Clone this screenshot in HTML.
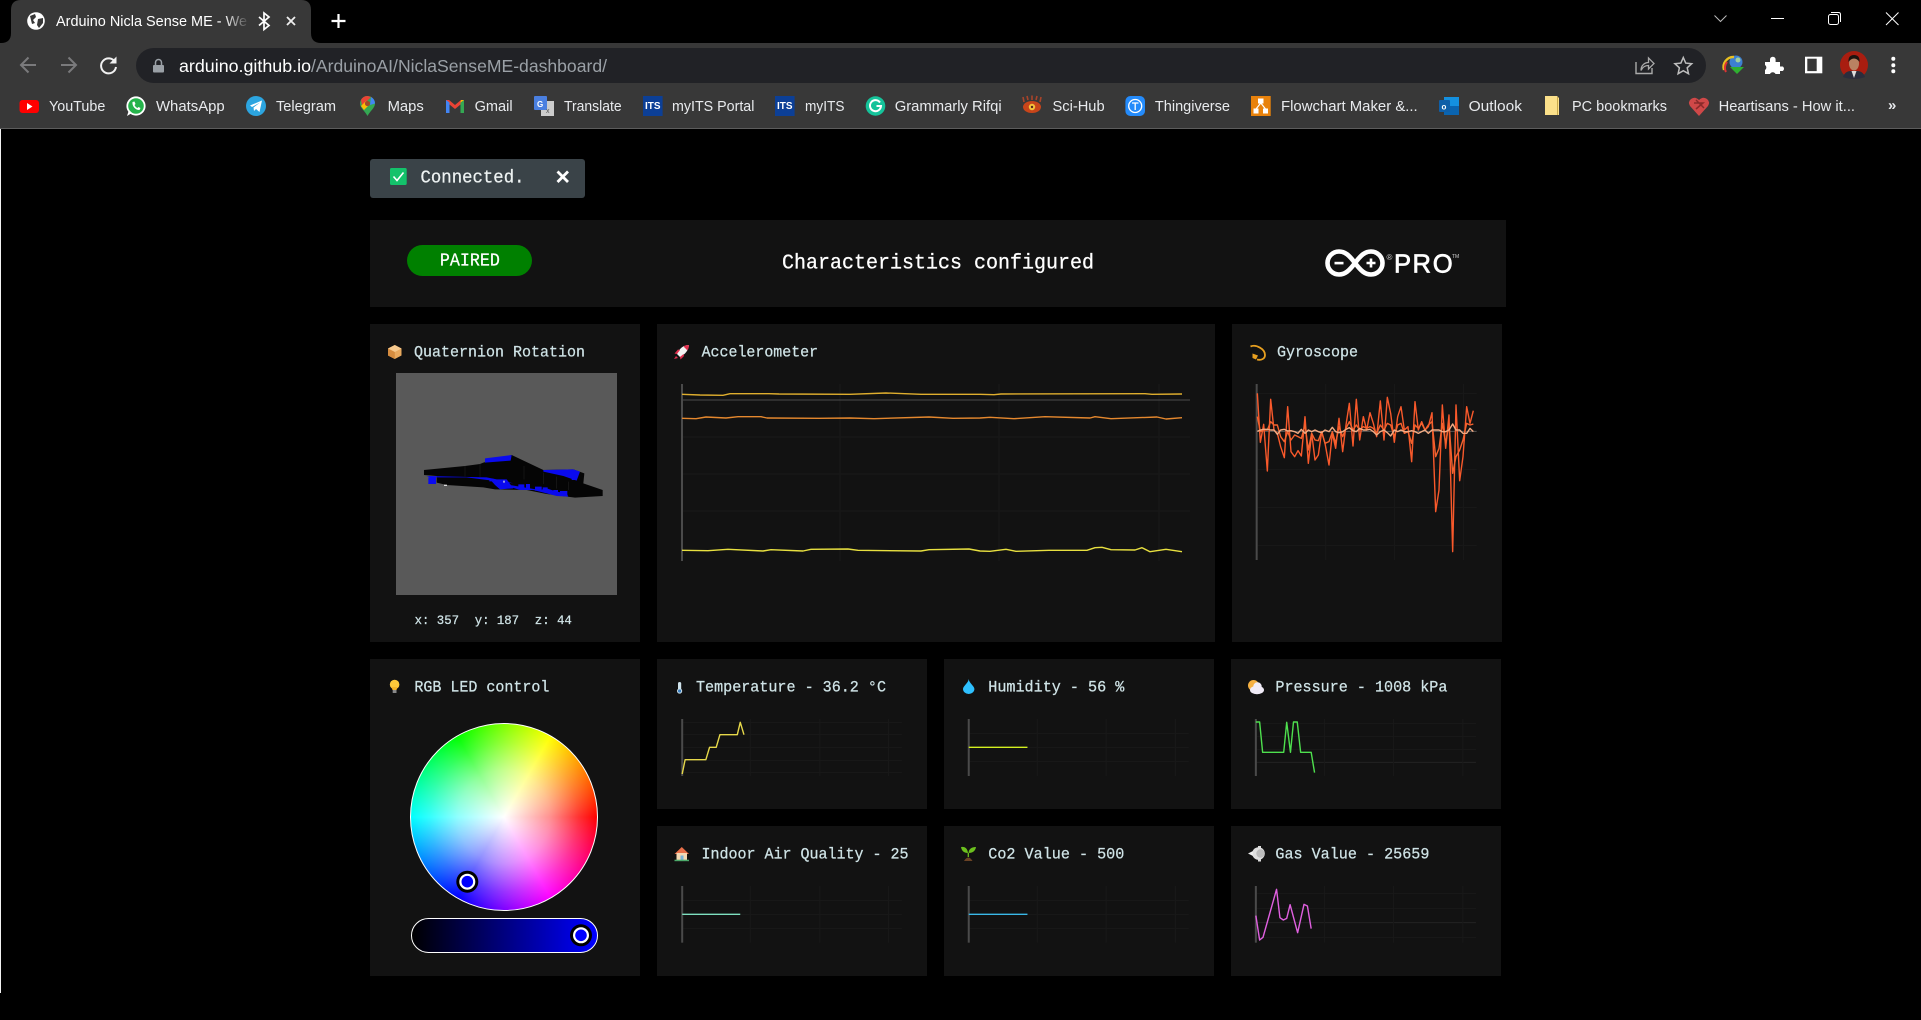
<!DOCTYPE html>
<html lang="en"><head><meta charset="utf-8"><title>Arduino Nicla Sense ME - Web Dashboard</title>
<style>
html,body{margin:0;padding:0;background:#000;width:1921px;height:1020px;overflow:hidden}
.p{position:absolute;background:#121212}
svg.o{position:absolute;left:0;top:0}
.ui{font-family:"Liberation Sans",sans-serif;font-size:15px;fill:#e8eaed}
.m{font-family:"Liberation Mono",monospace;font-size:16px;fill:#cfe3e6;stroke:#cfe3e6;stroke-width:.25px}
.g line{stroke:#191919;stroke-width:1;vector-effect:non-scaling-stroke}
.ax{stroke:#4a4a4a;stroke-width:2;vector-effect:non-scaling-stroke}
.l{fill:none;stroke-width:1.4;stroke-linejoin:round;vector-effect:non-scaling-stroke}
</style></head><body>
<div class="p" style="left:0;top:129px;width:1px;height:864px;background:#f2f2f2"></div>
<div class="p" style="left:370px;top:159px;width:215px;height:39px;background:#3a4348;border-radius:3px"></div>
<div class="p" style="left:370px;top:220px;width:1136px;height:87px"></div>
<div class="p" style="left:370px;top:324px;width:270px;height:318px"></div>
<div class="p" style="left:657px;top:324px;width:558px;height:318px"></div>
<div class="p" style="left:1232px;top:324px;width:270px;height:318px"></div>
<div class="p" style="left:370px;top:659px;width:270px;height:317px"></div>
<div class="p" style="left:657px;top:659px;width:270px;height:150px"></div>
<div class="p" style="left:944px;top:659px;width:270px;height:150px"></div>
<div class="p" style="left:1231px;top:659px;width:270px;height:150px"></div>
<div class="p" style="left:657px;top:826px;width:270px;height:150px"></div>
<div class="p" style="left:944px;top:826px;width:270px;height:150px"></div>
<div class="p" style="left:1231px;top:826px;width:270px;height:150px"></div>
<div class="p" style="left:396px;top:373px;width:221px;height:222px;background:#595959"></div>
<div class="p" style="left:410px;top:722.5px;width:188px;height:188px;border-radius:50%;box-sizing:border-box;border:1.2px solid #fff;background:radial-gradient(circle closest-side,#fff 0,rgba(255,255,255,.56) 50%,rgba(255,255,255,.2) 80%,rgba(255,255,255,0) 100%),conic-gradient(from 90deg,#f00,#f0f,#00f,#0ff,#0f0,#ff0,#f00)"></div>
<div class="p" style="left:411px;top:918px;width:187px;height:35px;box-sizing:border-box;border:1.5px solid #fff;border-radius:18px;background:linear-gradient(to right,#000,#00f)"></div>

<svg class="o" width="1921" height="1020" viewBox="0 0 1921 1020" xmlns="http://www.w3.org/2000/svg">
<!-- browser chrome -->
<rect x="0" y="43" width="1921" height="85" fill="#383838"/>
<rect x="0" y="128" width="1921" height="1" fill="#5c5c5c"/>
<path d="M1,43 Q11,43 11,33 V10 Q11,0 21,0 H301 Q311,0 311,10 V33 Q311,43 321,43 Z" fill="#383838"/>
<circle cx="36" cy="21" r="8.8" fill="#fff"/>
<path d="M30,16 L35,14 L36,17 L33,20 L35,23 L32,24 Z M38,19 L43,18 L43,23 L39,28 L37,25 Z" fill="#383838"/>
<defs><linearGradient id="fade" x1="0" x2="1"><stop offset=".88" stop-color="#fff"/><stop offset="1" stop-color="#fff" stop-opacity=".1"/></linearGradient></defs>
<text x="56" y="26" class="ui" fill="url(#fade)" style="fill:url(#fade)" textLength="191" lengthAdjust="spacingAndGlyphs">Arduino Nicla Sense ME - We</text>
<path d="M259,17 L269,25.5 L264,29.5 V13 L269,17 L259,25.5" fill="none" stroke="#fff" stroke-width="1.7"/>
<path d="M287,17 L295,25 M295,17 L287,25" stroke="#eee" stroke-width="1.8"/>
<path d="M331.5,21 H345.5 M338.5,14 V28" stroke="#fff" stroke-width="2.2"/>
<path d="M1714.5,15.5 L1720.5,21.5 L1726.5,15.5" fill="none" stroke="#bbb" stroke-width="1"/>
<path d="M1771,18.5 H1784" stroke="#fff" stroke-width="1"/>
<rect x="1828.5" y="14.5" width="10" height="10" rx="2" fill="none" stroke="#fff"/>
<path d="M1831,12.5 H1838.5 Q1840.5,12.5 1840.5,14.5 V22" fill="none" stroke="#fff"/>
<path d="M1886,12.5 L1898.5,25 M1898.5,12.5 L1886,25" stroke="#fff" stroke-width="1"/>
<path d="M36,65 H22 M28.5,57.5 L21,65 L28.5,72.5" fill="none" stroke="#7a7a7c" stroke-width="2"/>
<path d="M61,65 H75 M68.5,57.5 L76,65 L68.5,72.5" fill="none" stroke="#7a7a7c" stroke-width="2"/>
<path d="M115,62 A7.5,7.5 0 1 0 116,67" fill="none" stroke="#f1f1f1" stroke-width="2"/>
<path d="M116.5,56.5 V63.5 H109.5 Z" fill="#f1f1f1"/>
<rect x="136" y="48" width="1570" height="35" rx="17.5" fill="#212226"/>
<rect x="153" y="65" width="11" height="7.5" rx="1" fill="#9aa0a6"/>
<path d="M155.5,65 V62.5 A3,3 0 0 1 161.5,62.5 V65" fill="none" stroke="#9aa0a6" stroke-width="1.5"/>
<text x="179" y="72" class="ui" style="font-size:17.5px;fill:#fff" textLength="132" lengthAdjust="spacingAndGlyphs">arduino.github.io</text>
<text x="311" y="72" class="ui" style="font-size:17.5px;fill:#9aa0a6" textLength="296" lengthAdjust="spacingAndGlyphs">/ArduinoAI/NiclaSenseME-dashboard/</text>
<path d="M1636,62 V73.5 H1652 V68" fill="none" stroke="#aaa" stroke-width="1.4"/>
<path d="M1641,70.5 C1641,65 1645,62.5 1648.5,62.5 V58 L1654,63.5 L1648.5,69 V65.5 C1645,65.5 1642.5,67 1641,70.5 Z" fill="none" stroke="#aaa" stroke-width="1.3"/>
<path d="M1683.3,57.5 L1685.7,63.1 L1691.7,63.7 L1687.2,67.8 L1688.5,73.7 L1683.3,70.7 L1678.1,73.7 L1679.4,67.8 L1674.9,63.7 L1680.9,63.1 Z" fill="none" stroke="#bdbdbd" stroke-width="1.5"/>
<circle cx="1736" cy="62" r="6.5" fill="#3d7fd0"/><circle cx="1738" cy="60" r="2.5" fill="#9fd0a0"/>
<path d="M1724,70 A10,10 0 0 1 1734,57" fill="none" stroke="#e8c020" stroke-width="2.4"/>
<path d="M1726,72 A9,9 0 0 1 1727,62" fill="none" stroke="#d33" stroke-width="2"/>
<path d="M1730,67 H1744 L1737,74 Z" fill="#2fb030"/>
<path d="M1765,62 H1770 V59.5 A2.8,2.8 0 0 1 1775.6,59.5 V62 H1780 V66.5 H1782.7 A2.6,2.6 0 0 1 1782.7,71 H1780 V74 H1775.5 A3,3 0 0 0 1770,74 H1765 V70 A3,3 0 0 0 1765,65 Z" fill="#fff"/>
<rect x="1805" y="56.7" width="17.3" height="16.6" fill="#fff"/><rect x="1807.3" y="58.7" width="9.4" height="12.4" fill="#383838"/>
<circle cx="1854" cy="65" r="14" fill="#a91d10"/>
<path d="M1843,77 Q1845,71 1851,71 H1857 Q1863,71 1865,77 Q1860,79 1854,79 Q1848,79 1843,77 Z" fill="#2a2d3c"/>
<path d="M1851.5,71 L1854,78 L1856.5,71 Z" fill="#ddd"/>
<ellipse cx="1854" cy="63.5" rx="5" ry="7" fill="#b98262"/>
<path d="M1848.5,62 Q1848,55 1854,55 Q1860,55 1859.5,62 Q1857,58.5 1854,58.5 Q1851,58.5 1848.5,62 Z" fill="#1c1410"/>
<circle cx="1893.3" cy="58.7" r="2" fill="#fff"/><circle cx="1893.3" cy="65.3" r="2" fill="#fff"/><circle cx="1893.3" cy="71.3" r="2" fill="#fff"/>

<!-- bookmarks -->
<rect x="19.5" y="100" width="19.5" height="13" rx="3" fill="#f00"/><path d="M27,103 L32.5,106.5 L27,110 Z" fill="#fff"/>
<text x="49" y="111" class="ui" textLength="56.3" lengthAdjust="spacingAndGlyphs">YouTube</text>
<circle cx="136" cy="106" r="9.6" fill="#fff"/><circle cx="136" cy="106" r="7.8" fill="#25b34b"/><path d="M127,116 L129,110 L132,113 Z" fill="#fff"/><path d="M132.5,102 C132,106 135,110 139.5,110 L140.5,108 L138.5,107 L137.5,108 C136,107.5 135,106 134.5,105 L135.5,104 L134.5,101.5 Z" fill="#fff"/>
<text x="156" y="111" class="ui" textLength="68.7" lengthAdjust="spacingAndGlyphs">WhatsApp</text>
<circle cx="256" cy="106" r="10" fill="#2ca5e0"/><path d="M250,105.5 L262,100.5 L259.5,112 L256,109 L254,111 L253.5,107.5 L260,102.5 L252,107 Z" fill="#fff"/>
<text x="276" y="111" class="ui" textLength="60" lengthAdjust="spacingAndGlyphs">Telegram</text>
<path d="M367.5,96 A7.5,7.5 0 0 1 375,103.5 C375,108 370,111 367.5,116 C365,111 360,108 360,103.5 A7.5,7.5 0 0 1 367.5,96 Z" fill="#34a853"/><path d="M361,100 A7.5,7.5 0 0 1 367.5,96 L371,97 L362,106 Z" fill="#ea4335"/><path d="M371,97 A7.5,7.5 0 0 1 375,103.5 L370,105 Z" fill="#4285f4"/><path d="M361,106 L366,101 L370,104 L364,110 Z" fill="#fbbc04"/><circle cx="367.5" cy="103.5" r="2.6" fill="#a04a2a"/>
<text x="387.6" y="111" class="ui" textLength="36.2" lengthAdjust="spacingAndGlyphs">Maps</text>
<path d="M446,113 V100 L449,100 L455,105 L461,100 L464,100 V113 H460.5 V104.5 L455,109 L449.5,104.5 V113 Z" fill="#ea4335"/><path d="M446,113 V100 L449.5,102.5 V113 Z" fill="#4285f4"/><path d="M460.5,113 V102.5 L464,100 V113 Z" fill="#34a853"/><path d="M460.5,102.5 L464,100 L461,100 Z" fill="#fbbc04"/>
<text x="474.6" y="111" class="ui" textLength="38" lengthAdjust="spacingAndGlyphs">Gmail</text>
<rect x="541" y="101" width="13" height="15" fill="#ccc"/><rect x="534" y="96" width="13" height="14" rx="1" fill="#4a7fe0"/><text x="537" y="107" style="font:bold 8px 'Liberation Sans',sans-serif;fill:#fff">G</text><text x="546" y="113" style="font:7px 'Liberation Sans',sans-serif;fill:#555">x</text>
<text x="564" y="111" class="ui" textLength="57.6" lengthAdjust="spacingAndGlyphs">Translate</text>
<rect x="643" y="96" width="19.6" height="20" fill="#0c3f96"/><text x="645" y="109" style="font:bold 10px 'Liberation Sans',sans-serif;fill:#fff" textLength="15.5" lengthAdjust="spacingAndGlyphs">ITS</text>
<text x="672" y="111" class="ui" textLength="82.4" lengthAdjust="spacingAndGlyphs">myITS Portal</text>
<rect x="775" y="96" width="19.6" height="20" fill="#0c3f96"/><text x="777" y="109" style="font:bold 10px 'Liberation Sans',sans-serif;fill:#fff" textLength="15.5" lengthAdjust="spacingAndGlyphs">ITS</text>
<text x="805" y="111" class="ui" textLength="39.5" lengthAdjust="spacingAndGlyphs">myITS</text>
<circle cx="875.5" cy="106" r="9.8" fill="#15c39a"/><path d="M880,102.5 A5.5,5.5 0 1 0 881,106 H876.5" fill="none" stroke="#fff" stroke-width="2"/>
<text x="894.7" y="111" class="ui" textLength="107" lengthAdjust="spacingAndGlyphs">Grammarly Rifqi</text>
<ellipse cx="1032" cy="107" rx="9" ry="6" fill="#c8451a"/><circle cx="1032" cy="107" r="3.2" fill="#f3c33c"/><circle cx="1032" cy="107" r="1.2" fill="#522"/><path d="M1024,102 L1023,97 M1028,100 L1027,96 M1032,100 L1032,95.5 M1036,100 L1037,96 M1040,102 L1041,97" stroke="#a9442a" stroke-width="1.6"/>
<text x="1052.5" y="111" class="ui" textLength="52.1" lengthAdjust="spacingAndGlyphs">Sci-Hub</text>
<rect x="1125.4" y="96" width="19.6" height="20" rx="5" fill="#248bfb"/><circle cx="1135.2" cy="106" r="6.5" fill="none" stroke="#fff" stroke-width="1.3"/><path d="M1132,103 H1138.5 M1135.2,103 V110" stroke="#fff" stroke-width="1.3"/>
<text x="1154.9" y="111" class="ui" textLength="75.1" lengthAdjust="spacingAndGlyphs">Thingiverse</text>
<rect x="1251" y="96" width="19.7" height="20" fill="#e8820c"/><rect x="1258" y="98.5" width="5.5" height="5" fill="#fff"/><rect x="1253.5" y="108.5" width="5" height="5" fill="#fff"/><rect x="1263" y="108.5" width="5" height="5" fill="#fff"/><path d="M1260.8,103 L1256,109 M1260.8,103 L1265.5,109" stroke="#fff" stroke-width="1.2"/>
<text x="1281" y="111" class="ui" textLength="136.7" lengthAdjust="spacingAndGlyphs">Flowchart Maker &amp;...</text>
<rect x="1444" y="97" width="15" height="18" fill="#1490df"/><rect x="1444" y="106" width="15" height="9" fill="#0a64b0"/><rect x="1439" y="100" width="11" height="12" rx="1" fill="#0f5fa8"/><text x="1441.5" y="109.5" style="font:bold 8px 'Liberation Sans',sans-serif;fill:#fff">o</text>
<text x="1468.6" y="111" class="ui" textLength="53.4" lengthAdjust="spacingAndGlyphs">Outlook</text>
<path d="M1545,96 H1557 L1559,98 V115 H1545 Z" fill="#fbe08a"/><path d="M1557.5,97 V115" stroke="#c9a94a"/>
<text x="1572" y="111" class="ui" textLength="95" lengthAdjust="spacingAndGlyphs">PC bookmarks</text>
<path d="M1699,116 L1690,106 Q1687.5,102 1691,99 Q1695,96 1699,100 Q1703,96 1707,99 Q1710.5,102 1708,106 Z" fill="#cf4848"/><path d="M1694,103 L1703,103 L1696,109 M1696,100 L1704,108" fill="none" stroke="#8a2a2a" stroke-width="1.5"/>
<text x="1718.6" y="111" class="ui" textLength="136.4" lengthAdjust="spacingAndGlyphs">Heartisans - How it...</text>
<text x="1888" y="110" class="ui" style="font-weight:bold">»</text>

<!-- toast -->
<rect x="390" y="168" width="16.7" height="17" rx="1.5" fill="#14c26b"/><path d="M393.5,176.5 L397,180.5 L403.5,172.5" fill="none" stroke="#fff" stroke-width="1.6"/>
<text x="420.5" y="182.5" class="m" style="font-size:18.5px;fill:#eef3f3;stroke:#eef3f3" textLength="104" lengthAdjust="spacingAndGlyphs">Connected.</text>
<path d="M557.5,171.5 L568,182 M568,171.5 L557.5,182" stroke="#fff" stroke-width="2.8"/>

<!-- header -->
<rect x="407" y="245" width="125" height="31" rx="15.5" fill="#008000"/>
<text x="439.9" y="265.5" class="m" style="font-size:18px;fill:#fff;stroke:#fff" textLength="60" lengthAdjust="spacingAndGlyphs">PAIRED</text>
<text x="782" y="268.5" class="m" style="font-size:21.5px;fill:#fff;stroke:#fff" textLength="312" lengthAdjust="spacingAndGlyphs">Characteristics configured</text>
<path d="M1355,263 C1349,255 1345,251.5 1339,251.5 A11.5,11.5 0 0 0 1339,274.5 C1345,274.5 1349,271 1355,263 C1361,255 1365,251.5 1371,251.5 A11.5,11.5 0 0 1 1371,274.5 C1365,274.5 1361,271 1355,263 Z" fill="none" stroke="#fff" stroke-width="4.6"/>
<rect x="1334.5" y="261.8" width="9" height="2.6" fill="#fff"/>
<path d="M1366.5,263 H1375.5 M1371,258.5 V267.5" stroke="#fff" stroke-width="2.6"/>
<text x="1386.5" y="260" style="font:8px 'Liberation Sans',sans-serif;fill:#ccc">®</text>
<text y="272.7" style="font:25.6px 'Liberation Sans',sans-serif;fill:#fff;stroke:#fff;stroke-width:.7px" x="1394 1412.5 1432.7">PRO</text>
<text x="1452" y="258" style="font:5px 'Liberation Sans',sans-serif;fill:#ccc">TM</text>

<!-- 3D object -->
<g transform="translate(400 390) scale(.33333)">
<path d="M72,240 L195,228 L240,222 L250,218 L335,195 L430,240 L520,238 L553,250 L550,280 L608,300 L608,318 L525,323 L440,312 L380,300 L285,298 L250,292 L140,285 L110,278 L110,258 L72,255 Z" fill="#050505"/>
<path d="M255,205 L335,195 L332,212 L255,218 Z M430,240 L520,238 L540,245 L530,272 L490,258 L430,245 Z" fill="#0a0aee"/>
<path d="M85,262 L108,262 L108,282 L85,282 Z M80,258 L260,262 L300,270 L340,280 L300,275 L200,262 L90,262 Z M270,268 L320,268 L340,295 L300,298 L285,285 Z M330,285 L390,295 L420,300 L440,295 L470,305 L500,310 L505,320 L470,318 L440,310 L400,300 L360,300 L335,292 Z" fill="#0a0aee"/>
<path d="M355,283 h18 v10 h-18 z M378,282 h12 v16 h-12 z M405,290 h20 v12 h-20 z M428,292 h15 v14 h-15 z M460,300 h14 v12 h-14 z M480,303 h22 v14 h-22 z M268,266 h12 v8 h-12 z M515,245 h10 v25 h-10 z" fill="#0a0aee"/>
<rect x="132" y="284" width="9" height="4" fill="#ddd"/><rect x="310" y="272" width="4" height="6" fill="#ddd"/>
<path d="M195,228 V260 M240,222 V262 M372,228 V268 M430,248 V282 M470,260 V296 M505,275 V300" stroke="#1c1c1c" stroke-width="2"/>
</g>
<text x="414.6" y="623.8" class="m" style="font-size:13px" textLength="44.4" lengthAdjust="spacingAndGlyphs">x: 357</text>
<text x="474.7" y="623.8" class="m" style="font-size:13px" textLength="44.4" lengthAdjust="spacingAndGlyphs">y: 187</text>
<text x="534.8" y="623.8" class="m" style="font-size:13px" textLength="37" lengthAdjust="spacingAndGlyphs">z: 44</text>

<!-- titles and emoji -->
<path d="M394.8,345 L401.5,348.5 V355.5 L394.8,359 L388,355.5 V348.5 Z" fill="#e8a95e"/><path d="M394.8,352 L401.5,348.5 L394.8,345 L388,348.5 Z" fill="#f6c98e"/><path d="M394.8,352 V359 L388,355.5 V348.5 Z" fill="#d58c3f"/>
<text x="414" y="356.5" class="m" textLength="171" lengthAdjust="spacingAndGlyphs">Quaternion Rotation</text>
<path d="M689,345 Q681,345 677,354 L680,357 Q688,353 689,345 Z" fill="#f2f2f2"/><path d="M689,345 Q685,345 683.5,346.5 L687.5,350.5 Q689,348 689,345 Z" fill="#e0304e"/><path d="M677,354 L674.5,353.5 L678,349.5 L680,350 Z M680,357 L680.5,359.5 L684,356 L683.5,354 Z M676,356 L674,359 L678,358 Z" fill="#e0304e"/>
<text x="701.6" y="356.5" class="m" textLength="116.5" lengthAdjust="spacingAndGlyphs">Accelerometer</text>
<path d="M1250.5,346.5 C1256,344 1265,349 1265,355 C1265,359 1261,360.5 1257,359.5" fill="none" stroke="#e8a020" stroke-width="1.8"/><path d="M1252.5,353.5 L1258,355.5 L1256,359.5 L1252.5,358 Z" fill="#e8a020"/>
<text x="1277" y="356.5" class="m" textLength="81" lengthAdjust="spacingAndGlyphs">Gyroscope</text>
<circle cx="394.6" cy="684.5" r="4.8" fill="#fdc93a"/><path d="M391.5,687 H397.5 L396.5,690 H392.5 Z" fill="#f5b52a"/><rect x="392.7" y="690" width="3.8" height="3" fill="#888"/>
<text x="414.4" y="691.5" class="m" textLength="135" lengthAdjust="spacingAndGlyphs">RGB LED control</text>
<rect x="678" y="682" width="3.2" height="10" rx="1.6" fill="#cfe2ea"/><circle cx="679.6" cy="691" r="2.6" fill="#cfe2ea"/><circle cx="679.6" cy="691" r="1.6" fill="#3a7ec0"/>
<text x="696" y="691.5" class="m" textLength="190" lengthAdjust="spacingAndGlyphs">Temperature - 36.2 °C</text>
<path d="M968.7,679 C969,683 974.4,686 974.4,689 A5.7,5 0 0 1 963,689 C963,686 968.4,683 968.7,679 Z" fill="#2ec0ff"/>
<text x="988.3" y="691.5" class="m" textLength="136" lengthAdjust="spacingAndGlyphs">Humidity - 56 %</text>
<circle cx="1253.5" cy="685.5" r="5.5" fill="#f5b042"/><ellipse cx="1257" cy="690" rx="7" ry="4.2" fill="#f0ebf7"/><circle cx="1257.5" cy="686.5" r="4.2" fill="#f0ebf7"/>
<text x="1275.4" y="691.5" class="m" textLength="172" lengthAdjust="spacingAndGlyphs">Pressure - 1008 kPa</text>
<path d="M681.8,847 L689,854 H687 V860.7 H676.5 V854 H674.5 Z" fill="#e8704a"/><rect x="676.5" y="853" width="10.5" height="7.7" fill="#f4d9b4"/><rect x="680.5" y="855.5" width="3" height="5.2" fill="#7ab5d8"/><rect x="674.5" y="859.7" width="14.5" height="1.5" fill="#4ca96a"/>
<text x="701.5" y="858.5" class="m" textLength="207" lengthAdjust="spacingAndGlyphs">Indoor Air Quality - 25</text>
<path d="M968,853 Q962,853 961,847 Q967,846 968,853 Z M968.5,853 Q969,847 976,847 Q975,853 968.5,853 Z" fill="#6cc01e"/><path d="M968.3,853 V857" stroke="#6cc01e" stroke-width="1.3"/><path d="M964,861 Q968.3,854 972.5,861 Z" fill="#6b4325"/>
<text x="988.3" y="858.5" class="m" textLength="136" lengthAdjust="spacingAndGlyphs">Co2 Value - 500</text>
<circle cx="1258.5" cy="853.5" r="6.3" fill="#e0e0e0"/><circle cx="1260.5" cy="853.5" r="4.2" fill="#bcbcbc"/><path d="M1248,853.5 L1253,851 V856 Z" fill="#eee"/><rect x="1258" y="846" width="3" height="2" fill="#ddd"/><rect x="1258" y="859.5" width="3" height="2" fill="#ddd"/>
<text x="1275.4" y="858.5" class="m" textLength="154" lengthAdjust="spacingAndGlyphs">Gas Value - 25659</text>

<!-- accelerometer chart -->
<g class="g"><line x1="682" y1="437" x2="1190" y2="437"/><line x1="682" y1="474" x2="1190" y2="474"/><line x1="682" y1="511" x2="1190" y2="511"/><line x1="840" y1="384" x2="840" y2="561"/><line x1="999" y1="384" x2="999" y2="561"/><line x1="1159" y1="384" x2="1159" y2="561"/></g>
<line x1="682" y1="400" x2="1190" y2="400" stroke="#4c4c4c"/>
<line x1="682" y1="384" x2="682" y2="561" class="ax"/>
<polyline class="l" stroke="#dfae2e" points="682,394.3 700,395 723,395.3 730,393.7 769,393.7 779,394 850,394.3 886,393 921,394.3 980,394.3 994,394.7 1001,394 1145,393.7 1152,394.3 1182,394"/>
<polyline class="l" stroke="#e5882e" points="682,418.3 696,418.7 706,417 726,418 738,416.7 761,416.7 767,418 819,418.3 850,418 874,418.7 929,417 953,418.3 980,418 990,417.3 1014,418.7 1045,416.7 1090,418 1095,416.7 1111,418.7 1157,417 1166,419 1182,417.7"/>
<polyline class="l" stroke="#e8e040" points="682,550.3 708,550.7 728,549.3 763,551 771,549.7 803,551 811,549.3 848,549 858,550.3 921,551 929,549.7 969,549 980,551 990,551.3 1006,549.3 1016,551.3 1049,550.3 1071,550.3 1087,550.3 1095,547.7 1102,547.3 1111,549.7 1135,550 1142,547.7 1150,551.7 1166,549.3 1182,551.7"/>

<!-- gyroscope chart -->
<g transform="translate(1250 380) scale(.33333)">
<g class="g"><line x1="20" y1="40" x2="680" y2="40"/><line x1="20" y1="268" x2="680" y2="268"/><line x1="20" y1="382" x2="680" y2="382"/><line x1="20" y1="496" x2="680" y2="496"/><line x1="227" y1="12" x2="227" y2="540"/><line x1="433" y1="12" x2="433" y2="540"/><line x1="640" y1="12" x2="640" y2="540"/></g>
<line x1="20" y1="154" x2="680" y2="154" stroke="#555" style="vector-effect:non-scaling-stroke"/>
<line x1="20" y1="12" x2="20" y2="540" class="ax"/>
<polyline class="l" stroke="#f9592b" points="22,40 31,187 41,133 52,273 62,58 72,150 82,160 92,200 103,233 113,80 123,215 134,230 144,212 154,228 165,110 175,250 185,160 195,240 205,225 215,155 225,190 237,255 247,160 257,205 267,115 278,215 288,135 298,70 309,198 319,58 329,180 340,110 350,150 360,98 370,130 380,170 391,63 402,180 412,52 422,100 433,187 443,110 453,80 463,150 474,140 485,245 495,65 505,150 515,125 525,150 535,140 546,98 557,395 567,330 577,75 587,205 597,105 608,515 618,75 629,302 639,230 650,80 660,130 670,92"/>
<polyline class="l" stroke="#f4622e" points="22,110 31,155 41,150 52,150 62,125 72,135 82,135 92,170 103,185 113,155 123,180 134,165 144,170 154,175 165,135 175,210 185,160 195,180 205,182 215,155 225,190 237,185 247,155 257,190 267,140 278,170 288,145 298,125 309,150 319,135 329,150 340,140 350,145 360,140 370,145 380,160 391,135 402,150 412,130 422,135 433,170 443,135 453,130 463,160 474,155 485,190 495,135 505,145 515,130 525,150 535,135 546,125 557,230 567,205 577,130 587,190 597,130 608,280 618,230 629,210 639,180 650,130 660,135 670,132"/>
<polyline class="l" stroke="#f2aa82" points="22,154 31,150 41,148 52,148 62,150 72,150 82,163 92,150 103,148 113,153 123,152 134,155 144,160 154,148 165,160 175,150 185,155 195,150 205,155 215,158 225,150 237,155 247,142 257,155 267,158 278,155 288,148 298,143 309,152 319,155 329,145 340,150 350,150 360,148 370,155 380,165 391,155 402,150 412,158 422,168 433,150 443,155 453,150 463,155 474,155 485,152 495,155 505,160 515,155 525,150 535,160 546,150 557,150 567,150 577,155 587,155 597,150 608,132 618,150 629,150 639,160 650,160 660,145 670,155"/>
</g>

<!-- small charts (left column) -->
<g transform="translate(360 650) scale(.3699 .33333)">
<g class="g"><line x1="871" y1="217" x2="1465" y2="217"/><line x1="871" y1="254" x2="1465" y2="254"/><line x1="871" y1="292" x2="1465" y2="292"/><line x1="871" y1="331" x2="1465" y2="331"/><line x1="871" y1="368" x2="1465" y2="368"/><line x1="1055" y1="207" x2="1055" y2="378"/><line x1="1243" y1="207" x2="1243" y2="378"/><line x1="1429" y1="207" x2="1429" y2="378"/>
<line x1="871" y1="751" x2="1465" y2="751"/><line x1="871" y1="793" x2="1465" y2="793"/><line x1="871" y1="835" x2="1465" y2="835"/><line x1="1055" y1="708" x2="1055" y2="878"/><line x1="1243" y1="708" x2="1243" y2="878"/><line x1="1429" y1="708" x2="1429" y2="878"/></g>
<line x1="871" y1="207" x2="871" y2="378" class="ax"/><line x1="871" y1="708" x2="871" y2="878" class="ax"/>
<polyline class="l" stroke="#e6d84a" points="871,372 879,329 935,329 945,292 963,292 973,254 1020,254 1028,217 1038,254"/>
<polyline class="l" stroke="#7fe0c0" points="871,793 1028,793"/>
</g>
<g transform="translate(930 650) scale(.37628 .33333)">
<g class="g"><line x1="103" y1="250" x2="688" y2="250"/><line x1="103" y1="292" x2="688" y2="292"/><line x1="103" y1="334" x2="688" y2="334"/><line x1="285" y1="207" x2="285" y2="378"/><line x1="468" y1="207" x2="468" y2="378"/><line x1="652" y1="207" x2="652" y2="378"/>
<line x1="103" y1="751" x2="688" y2="751"/><line x1="103" y1="793" x2="688" y2="793"/><line x1="103" y1="835" x2="688" y2="835"/><line x1="285" y1="708" x2="285" y2="878"/><line x1="468" y1="708" x2="468" y2="878"/><line x1="652" y1="708" x2="652" y2="878"/>
<line x1="866" y1="220" x2="1451" y2="220"/><line x1="866" y1="259" x2="1451" y2="259"/><line x1="866" y1="298" x2="1451" y2="298"/><line x1="866" y1="337" x2="1451" y2="337" style="stroke:#222"/><line x1="1048" y1="207" x2="1048" y2="378"/><line x1="1232" y1="207" x2="1232" y2="378"/><line x1="1416" y1="207" x2="1416" y2="378"/>
<line x1="866" y1="730" x2="1451" y2="730"/><line x1="866" y1="775" x2="1451" y2="775"/><line x1="866" y1="818" x2="1451" y2="818" style="stroke:#222"/><line x1="866" y1="862" x2="1451" y2="862"/><line x1="1048" y1="708" x2="1048" y2="878"/><line x1="1232" y1="708" x2="1232" y2="878"/><line x1="1416" y1="708" x2="1416" y2="878"/></g>
<line x1="103" y1="207" x2="103" y2="378" class="ax"/><line x1="103" y1="708" x2="103" y2="878" class="ax"/><line x1="866" y1="207" x2="866" y2="378" class="ax"/><line x1="866" y1="708" x2="866" y2="878" class="ax"/>
<polyline class="l" stroke="#d4f020" points="103,292 259,292"/>
<polyline class="l" stroke="#3ab8e8" points="103,793 259,793"/>
<polyline class="l" stroke="#4ee04e" points="866,216 876,216 884,307 940,307 948,217 958,307 966,216 976,216 985,307 1013,307 1022,368"/>
<polyline class="l" stroke="#e060e0" points="866,797 876,870 885,862 921,718 930,803 939,810 948,805 957,764 977,848 994,763 1003,768 1013,836"/>
</g>

<!-- colour handles -->
<circle cx="467.3" cy="881.7" r="11" fill="#000"/><circle cx="467.3" cy="881.7" r="8" fill="#fff"/><circle cx="467.3" cy="881.7" r="5.8" fill="#00f"/>
<circle cx="581" cy="935.3" r="11" fill="#000"/><circle cx="581" cy="935.3" r="8" fill="#fff"/><circle cx="581" cy="935.3" r="5.8" fill="#00f"/>
</svg>
</body></html>
